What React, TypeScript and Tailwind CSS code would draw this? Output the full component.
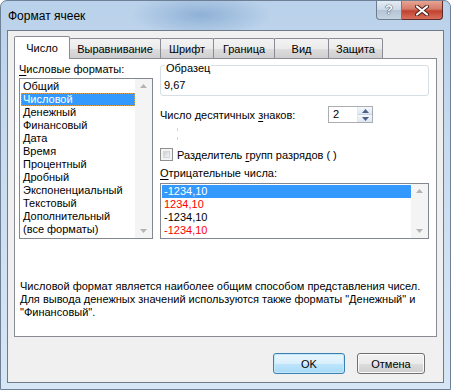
import React from "react";

const formats = [
  "Общий",
  "Числовой",
  "Денежный",
  "Финансовый",
  "Дата",
  "Время",
  "Процентный",
  "Дробный",
  "Экспоненциальный",
  "Текстовый",
  "Дополнительный",
  "(все форматы)",
];

const negatives = [
  { text: "-1234,10", color: "text-black", selected: true },
  { text: "1234,10", color: "text-[#ff0000]", selected: false },
  { text: "-1234,10", color: "text-black", selected: false },
  { text: "-1234,10", color: "text-[#ff0000]", selected: false },
];

const tabs = [
  { name: "Число", w: "w-[56px]" },
  { name: "Выравнивание", w: "w-[92px]" },
  { name: "Шрифт", w: "w-[54px]" },
  { name: "Граница", w: "w-[62px]" },
  { name: "Вид", w: "w-[55px]" },
  { name: "Защита", w: "w-[55px]" },
];

const Arrow = ({ down }: { down?: boolean }) => (
  <svg width="7" height="4" viewBox="0 0 7 4">
    <path d={down ? "M0 0h7L3.5 4z" : "M0 4h7L3.5 0z"} fill="#b4b4b4" />
  </svg>
);

const ScrollTrack = ({ w }: { w: string }) => (
  <div className={`${w} flex flex-col items-center justify-between py-[5px] bg-[#f4f4f4]`}>
    <Arrow />
    <Arrow down />
  </div>
);

export default function App() {
  return (
    <div
      className="w-[451px] h-[390px] flex flex-col rounded-t-[7px] border border-[#6d8096] bg-[radial-gradient(ellipse_70px_22px_at_200px_14px,#8fb1d6,transparent),linear-gradient(180deg,#b9d1ea,#c9dcef_40%,#d7e6f5)] text-[11px] leading-[14px] text-black whitespace-nowrap"
      style={{ fontFamily: '"Liberation Sans", Arial, sans-serif' }}
    >
      {/* title bar */}
      <div className="h-[29px] flex items-start">
        <div className="pl-[7px] pt-[8px] text-[12px] text-black">Формат ячеек</div>
        <div className="ml-auto mr-[7px] flex">
          <div className="w-[26px] h-[19px] flex items-center justify-center rounded-bl-[4px] border border-[#6d7d8e] border-t-0 bg-[linear-gradient(180deg,#e4ecf4,#cbd8e5_50%,#b3c4d6_51%,#c6d4e2)]">
            <span className="text-[13px] font-bold text-white [text-shadow:0_0_1px_#223,0_0_1px_#223]">?</span>
          </div>
          <div className="w-[41px] h-[19px] flex items-center justify-center rounded-br-[4px] border border-[#5e2a2a] border-t-0 border-l-0 bg-[linear-gradient(180deg,#e8a493,#d47a69_45%,#c0412f_55%,#d9705c)]">
            <svg width="14" height="11" viewBox="0 0 14 11">
              <path d="M2 1.5l10 8M12 1.5l-10 8" stroke="#4b1d18" strokeWidth="4" strokeLinecap="round" />
              <path d="M2 1.5l10 8M12 1.5l-10 8" stroke="#fff" strokeWidth="2.2" strokeLinecap="round" />
            </svg>
          </div>
        </div>
      </div>

      {/* client area */}
      <div className="flex-1 mx-[6px] mb-[6px] border border-[#6f7b88] bg-[#f0f0f0] px-[6px] pt-[4px] flex flex-col">
        {/* tabs */}
        <div className="flex items-end h-[23px]">
          {tabs.map((t, i) =>
            i === 0 ? (
              <div
                key={t.name}
                className={`${t.w} h-[23px] relative z-10 -mb-[1px] pb-[1px] flex items-center justify-center bg-white border border-b-0 border-[#898c95] rounded-t-[2px]`}
              >
                {t.name}
              </div>
            ) : (
              <div
                key={t.name}
                className={`${t.w} h-[20px] -ml-[1px] flex items-center justify-center border border-b-0 border-[#898c95] rounded-t-[2px] bg-[linear-gradient(180deg,#f3f3f3,#ebebeb_50%,#dddddd_51%,#cfcfcf)]`}
              >
                {t.name}
              </div>
            )
          )}
        </div>

        {/* panel */}
        <div className="h-[279px] border border-[#898c95] bg-white pl-[4px] pt-[3px] flex flex-col">
          <div className="flex gap-[7px]">
            {/* left column */}
            <div className="w-[134px] flex flex-col">
              <div>
                <u className="underline-offset-[2px]">Ч</u>исловые форматы:
              </div>
              <div className="mt-[2px] h-[161px] border border-[#828790] flex">
                <div className="flex-1 pt-[1px] pl-[1px] overflow-hidden">
                  {formats.map((f, i) =>
                    i === 1 ? (
                      <div
                        key={f}
                        className="h-[13px] leading-[11px] pl-[1px] bg-[#3399ff] text-white border border-dotted border-[#d8a050]"
                      >
                        {f}
                      </div>
                    ) : (
                      <div key={f} className="h-[13px] leading-[13px] pl-[2px]">
                        {f}
                      </div>
                    )
                  )}
                </div>
                <ScrollTrack w="w-[17px]" />
              </div>
            </div>

            {/* right column */}
            <div className="w-[269px] flex flex-col">
              <div className="relative mt-[3px] h-[31px] border border-[#d5dfe5] rounded-[3px] pt-[12px] pl-[3px]">
                <span className="absolute -top-[5px] left-[4px] bg-white px-[1px]">Образец</span>
                9,67
              </div>

              <div className="mt-[10px] h-[17px] flex items-center">
                <div className="w-[168px]">
                  Число десятичных <u className="underline-offset-[2px]">з</u>наков:
                </div>
                <div className="w-[45px] h-[17px] flex border border-[#abadb3] bg-white">
                  <div className="flex-1 pl-[4px] leading-[15px]">2</div>
                  <div className="w-[15px] flex flex-col border-l border-[#e3e9ef]">
                    <div className="flex-1 flex items-center justify-center bg-[linear-gradient(180deg,#f5f8fc,#dde7f1)] border-b border-[#c5d2df]">
                      <svg width="7" height="4" viewBox="0 0 7 4"><path d="M0 4h7L3.5 0z" fill="#4d6185" /></svg>
                    </div>
                    <div className="flex-1 flex items-center justify-center bg-[linear-gradient(180deg,#f5f8fc,#dde7f1)]">
                      <svg width="7" height="4" viewBox="0 0 7 4"><path d="M0 0h7L3.5 4z" fill="#4d6185" /></svg>
                    </div>
                  </div>
                </div>
              </div>

              <div className="h-[20px] pl-[17px] pt-[5px] flex flex-col gap-[6px]">
                <div className="w-[1px] h-[3px] bg-[#f5d38a]" />
                <div className="w-[1px] h-[3px] bg-[#f5d38a]" />
              </div>

              <div className="mt-[5px] h-[13px] flex items-center">
                <div className="w-[13px] h-[13px] border border-[#8e8f8f] bg-[#f4f4f4] p-[2px]">
                  <div className="w-full h-full bg-[linear-gradient(135deg,#cbcfd5,#f6f6f6)] border border-[#d4d6d9]" />
                </div>
                <div className="ml-[4px]">
                  Разделитель <u className="underline-offset-[2px]">г</u>рупп разрядов ( )
                </div>
              </div>

              <div className="mt-[5px]">
                <u className="underline-offset-[2px]">О</u>трицательные числа:
              </div>
              <div className="mt-[3px] h-[56px] border border-[#828790] flex">
                <div className="flex-1 pt-[1px] pl-[1px]">
                  {negatives.map((n, i) =>
                    n.selected ? (
                      <div key={i} className="h-[13px] leading-[13px] pl-[2px] bg-[#3399ff] text-white">
                        {n.text}
                      </div>
                    ) : (
                      <div key={i} className={`h-[13px] leading-[13px] pl-[2px] ${n.color}`}>
                        {n.text}
                      </div>
                    )
                  )}
                </div>
                <ScrollTrack w="w-[17px]" />
              </div>
            </div>
          </div>

          <div className="mt-[41px] ml-[1px] leading-[13px]">
            <div>Числовой формат является наиболее общим способом представления чисел.</div>
            <div>Для вывода денежных значений используются также форматы "Денежный" и</div>
            <div>"Финансовый".</div>
          </div>
        </div>

        {/* buttons */}
        <div className="mt-[16px] flex justify-end gap-[12px] pr-[12px]">
          <button className="w-[72px] h-[21px] rounded-[3px] border border-[#3c7fb1] bg-[linear-gradient(180deg,#eaf6fd,#d9f0fc_50%,#bee6fd_51%,#a7d9f5)] shadow-[inset_0_0_0_1px_#c4e8fb]">
            OK
          </button>
          <button className="w-[68px] h-[21px] rounded-[3px] border border-[#707070] bg-[linear-gradient(180deg,#f2f2f2,#ebebeb_50%,#dddddd_51%,#cfcfcf)] shadow-[inset_0_0_0_1px_#fbfbfb]">
            Отмена
          </button>
        </div>
      </div>
    </div>
  );
}
